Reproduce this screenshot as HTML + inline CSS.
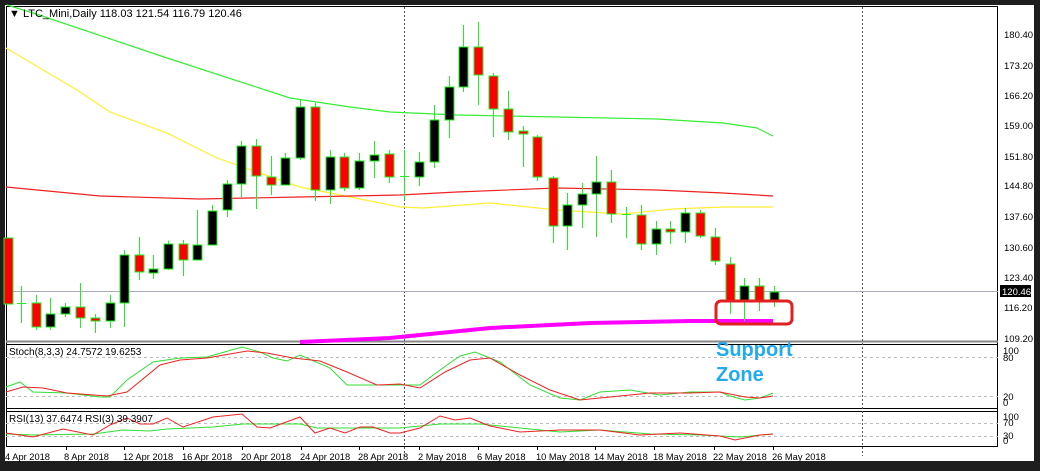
<!DOCTYPE html>
<html><head><meta charset="utf-8"><style>
html,body{margin:0;padding:0;background:#1e1e1e;width:1040px;height:471px;overflow:hidden}
svg{display:block}
text{font-family:"Liberation Sans",sans-serif}
</style></head><body>
<svg id="s" width="1040" height="471" xmlns="http://www.w3.org/2000/svg">
<rect x="0" y="0" width="1040" height="471" fill="#1e1e1e"/>
<rect x="5" y="5" width="1029" height="456" fill="#fff"/>
<rect x="6.5" y="6.5" width="991" height="440" fill="none" stroke="#000"/>
<line x1="6" y1="341.5" x2="998" y2="341.5" stroke="#888" stroke-width="2"/>
<line x1="6" y1="344.5" x2="998" y2="344.5" stroke="#000"/>
<line x1="6" y1="408.5" x2="998" y2="408.5" stroke="#000"/>
<line x1="6" y1="411.5" x2="998" y2="411.5" stroke="#000"/>
<g stroke="#bbb" stroke-dasharray="3,3">
<line x1="6" y1="357.5" x2="998" y2="357.5"/><line x1="6" y1="396.5" x2="998" y2="396.5"/>
<line x1="6" y1="423.5" x2="998" y2="423.5"/><line x1="6" y1="436.5" x2="998" y2="436.5"/>
</g>
<g stroke="#555" stroke-dasharray="2,2">
<line x1="404.5" y1="7" x2="404.5" y2="456"/><line x1="862.5" y1="7" x2="862.5" y2="456"/>
</g>
<line x1="6" y1="291.5" x2="998" y2="291.5" stroke="#aab" />
<polyline fill="none" stroke="#33ee33" stroke-width="1.2" points="7,5 33,13 167,58 290,98 350,107 390,112 457,115 557,117 657,119 723,123 757,128 773,136"/>
<polyline fill="none" stroke="#ffee33" stroke-width="1.2" points="6,48 77,90 110,112 167,133 217,158 300,187 400,207 423,208 490,203 557,210 623,214 673,209 723,207 773,207"/>
<polyline fill="none" stroke="#ee2222" stroke-width="1.2" points="6,187 100,196 200,199 300,197 400,195 457,192 557,188 657,190 723,193 773,196"/>
<polyline fill="none" stroke="#ff00ff" stroke-width="4" points="300,342 390,338 490,328 590,323 690,321 773,321"/>
<g id="c"></g>
<rect x="716" y="301" width="76" height="23" rx="5" fill="none" stroke="#e02020" stroke-width="3"/>
<text x="716" y="356" font-size="20" font-weight="bold" fill="#22aaee">Support</text>
<text x="716" y="381" font-size="20" font-weight="bold" fill="#22aaee">Zone</text>
<polyline fill="none" stroke="#33dd33" points="6,387 20,382 33,392 67,393 100,397 110,397 127,380 153,362 180,358 207,357 242,347 260,352 273,358 287,361 300,355 330,368 347,385 400,385 420,385 440,370 460,356 475,352 500,362 530,385 560,398 580,400 600,392 630,390 660,395 690,392 720,392 730,396 745,400 760,398 773,393"/>
<polyline fill="none" stroke="#ee2222" points="6,392 23,387 43,388 67,393 107,396 127,392 160,365 180,360 207,358 247,351 267,353 293,358 320,361 347,372 377,385 400,384 420,388 445,372 470,360 490,358 520,375 550,390 580,400 610,397 650,393 690,393 720,392 745,397 760,398 773,396"/>
<polyline fill="none" stroke="#33dd33" points="6,434 33,435 93,434 123,430 150,431 167,429 213,427 243,424 300,424 317,428 400,428 440,424 480,424 520,428 560,432 600,430 650,434 700,435 740,437 773,434"/>
<polyline fill="none" stroke="#ee2222" points="6,433 33,437 63,429 93,435 110,425 127,418 140,424 153,424 167,418 183,427 213,417 242,414 257,427 270,428 300,417 315,433 330,428 345,433 360,427 373,427 390,433 400,433 420,428 440,416 455,420 470,418 490,426 520,432 560,430 600,430 640,435 680,433 720,436 735,440 760,435 773,434"/>
<text x="9" y="17" font-size="11" fill="#000">▼ LTC_Mini,Daily  118.03 121.54 116.79 120.46</text>
<text x="9" y="355" font-size="10" fill="#000">Stoch(8,3,3) 24.7572 19.6253</text>
<text x="9" y="422" font-size="10" fill="#000">RSI(13) 37.6474  RSI(3) 39.3907</text>
<g font-size="9.5" fill="#000">
<text x="1004" y="38">180.40</text><text x="1004" y="69">173.20</text><text x="1004" y="99">166.20</text>
<text x="1004" y="129">159.00</text><text x="1004" y="160">151.80</text><text x="1004" y="189">144.80</text>
<text x="1004" y="220">137.60</text><text x="1004" y="251">130.60</text><text x="1004" y="281">123.40</text>
<text x="1004" y="311">116.20</text><text x="1004" y="342">109.20</text>
<text x="1003" y="354">100</text><text x="1003" y="361">80</text><text x="1003" y="400">20</text><text x="1003" y="406">0</text>
<text x="1003" y="420">100</text><text x="1003" y="426">70</text><text x="1003" y="439">30</text><text x="1003" y="444">0</text>
</g>
<rect x="1000" y="285" width="31" height="12" fill="#000"/>
<text x="1002" y="295" font-size="9.5" fill="#fff">120.46</text>
<g stroke="#000">
<line x1="66.5" y1="447" x2="66.5" y2="450"/><line x1="124.5" y1="447" x2="124.5" y2="450"/><line x1="183.5" y1="447" x2="183.5" y2="450"/><line x1="242.5" y1="447" x2="242.5" y2="450"/><line x1="301.5" y1="447" x2="301.5" y2="450"/><line x1="359.5" y1="447" x2="359.5" y2="450"/><line x1="419.5" y1="447" x2="419.5" y2="450"/><line x1="478.5" y1="447" x2="478.5" y2="450"/><line x1="537.5" y1="447" x2="537.5" y2="450"/><line x1="595.5" y1="447" x2="595.5" y2="450"/><line x1="654.5" y1="447" x2="654.5" y2="450"/><line x1="714.5" y1="447" x2="714.5" y2="450"/><line x1="773.5" y1="447" x2="773.5" y2="450"/>
</g>
<g font-size="9.3" fill="#000">
<text x="5" y="460">4 Apr 2018</text><text x="64" y="460">8 Apr 2018</text><text x="123" y="460">12 Apr 2018</text>
<text x="182" y="460">16 Apr 2018</text><text x="241" y="460">20 Apr 2018</text><text x="300" y="460">24 Apr 2018</text>
<text x="358" y="460">28 Apr 2018</text><text x="418" y="460">2 May 2018</text><text x="477" y="460">6 May 2018</text>
<text x="536" y="460">10 May 2018</text><text x="594" y="460">14 May 2018</text><text x="653" y="460">18 May 2018</text>
<text x="713" y="460">22 May 2018</text><text x="772" y="460">26 May 2018</text>
</g>
</svg>
<script>
var C=[[8,'r',238,304,238,304],[21,'d',303,303,286,323],[36,'r',303,327,295,330],[50,'b',314,327,298,330],[65,'b',307,314,303,317],[80,'r',307,318,283,328],[95,'r',318,321,314,333],[110,'b',303,321,295,328],[124,'b',255,303,250,327],[139,'r',255,272,237,280],[153,'b',269,273,255,279],[168,'b',244,269,241,270],[183,'r',244,260,240,276],[197,'b',245,260,210,260],[212,'b',211,245,205,245],[227,'b',184,210,180,217],[241,'b',146,184,141,197],[256,'r',146,176,139,209],[271,'r',177,185,156,195],[285,'b',158,185,153,185],[300,'b',107,158,100,160],[315,'r',107,190,103,201],[330,'b',157,190,150,204],[344,'r',157,188,153,191],[359,'b',161,188,153,190],[374,'b',155,161,141,178],[389,'r',154,177,150,183],[404,'d',176,176,150,200],[419,'b',162,177,152,186],[434,'b',120,162,105,168],[449,'b',87,120,76,138],[463,'b',47,87,25,92],[478,'r',47,75,22,105],[493,'r',76,109,73,137],[508,'r',109,132,91,140],[523,'r',131,134,126,167],[537,'r',137,177,135,181],[553,'r',178,226,176,243],[567,'b',205,226,193,250],[582,'b',194,205,183,228],[596,'b',182,194,156,237],[611,'r',182,214,170,223],[626,'d',214,214,207,238],[641,'r',215,244,205,250],[656,'b',229,244,221,255],[670,'r',229,232,221,244],[685,'b',213,232,208,243],[700,'r',213,236,210,238],[715,'r',237,261,228,265],[730,'r',264,301,257,314],[744,'b',286,301,278,321],[759,'r',286,301,278,311],[774,'b',292,301,286,307]];
var h='';C.forEach(function(c){var x=c[0];h+='<line x1="'+(x+.5)+'" y1="'+c[4]+'" x2="'+(x+.5)+'" y2="'+c[5]+'" stroke="#22ee22"/>';
if(c[1]=='d'){h+='<line x1="'+(x-4)+'" y1="'+(c[2]+.5)+'" x2="'+(x+5)+'" y2="'+(c[2]+.5)+'" stroke="#22ee22"/>';}
else{var hh=Math.max(c[3]-c[2],2);h+='<rect x="'+(x-4)+'" y="'+c[2]+'" width="9" height="'+hh+'" fill="'+(c[1]=='r'?'#f00':'#000')+'" stroke="#22ee22"/>';}});
document.getElementById('c').innerHTML=h;
</script>
</body></html>
